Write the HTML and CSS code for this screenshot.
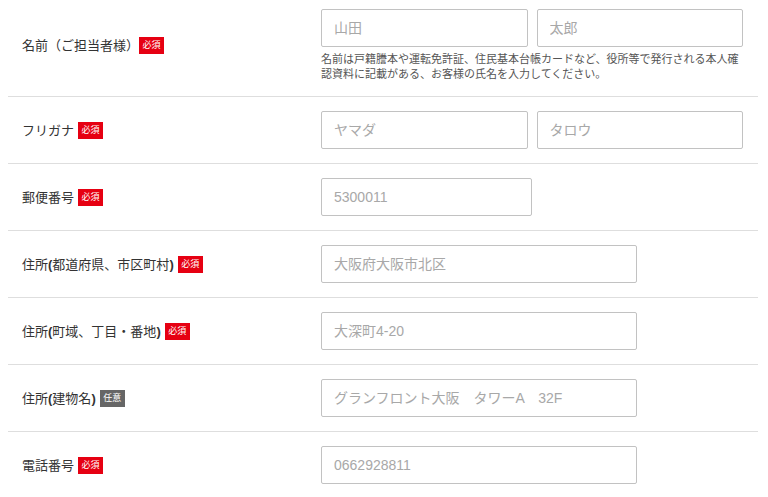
FILE: index.html
```html
<!DOCTYPE html>
<html lang="ja">
<head>
    <meta charset="UTF-8">
    <meta name="viewport" content="width=device-width, initial-scale=1.0">
    <title>お客様情報の入力</title>
    <link rel="stylesheet" href="styles.css">
</head>
<body>
    <form class="entry-form">
        <div class="form-row">
            <div class="form-label">名前（ご担当者様）<span class="badge tight">必須</span></div>
            <div class="form-field">
                <div class="field-pair">
                    <input type="text" class="text-input" placeholder="山田">
                    <input type="text" class="text-input" placeholder="太郎">
                </div>
                <p class="field-note">名前は戸籍謄本や運転免許証、住民基本台帳カードなど、役所等で発行される本人確認資料に記載がある、お客様の氏名を入力してください。</p>
            </div>
        </div>
        <div class="form-row">
            <div class="form-label">フリガナ<span class="badge">必須</span></div>
            <div class="form-field">
                <div class="field-pair">
                    <input type="text" class="text-input" placeholder="ヤマダ">
                    <input type="text" class="text-input" placeholder="タロウ">
                </div>
            </div>
        </div>
        <div class="form-row">
            <div class="form-label">郵便番号<span class="badge">必須</span></div>
            <div class="form-field">
                <input type="text" class="text-input zip" placeholder="5300011">
            </div>
        </div>
        <div class="form-row">
            <div class="form-label">住所<b>(</b>都道府県、市区町村<b>)</b><span class="badge">必須</span></div>
            <div class="form-field">
                <input type="text" class="text-input wide" placeholder="大阪府大阪市北区">
            </div>
        </div>
        <div class="form-row">
            <div class="form-label">住所<b>(</b>町域、丁目・番地<b>)</b><span class="badge">必須</span></div>
            <div class="form-field">
                <input type="text" class="text-input wide" placeholder="大深町4-20">
            </div>
        </div>
        <div class="form-row">
            <div class="form-label">住所<b>(</b>建物名<b>)</b><span class="badge optional">任意</span></div>
            <div class="form-field">
                <input type="text" class="text-input wide" placeholder="グランフロント大阪　タワーA　32F">
            </div>
        </div>
        <div class="form-row">
            <div class="form-label">電話番号<span class="badge">必須</span></div>
            <div class="form-field">
                <input type="text" class="text-input wide" placeholder="0662928811">
            </div>
        </div>
    </form>
</body>
</html>
```

FILE: styles.css
```css
body {
    font-family: "Liberation Sans", "Noto Sans CJK JP", sans-serif;
    background-color: #fff;
    color: #333;
    margin: 0;
    padding: 0;
}

.entry-form {
    width: 750px;
    margin-left: 8px;
}

.form-row {
    display: grid;
    grid-template-columns: 313px 1fr;
    align-items: center;
    padding: 14px 0;
    border-bottom: 1px solid #dedede;
}

.form-row:first-child {
    padding-top: 9px;
}

.form-label {
    padding-left: 14px;
    font-size: 13px;
    line-height: 17px;
    display: flex;
    align-items: center;
}

.form-label b {
    font-weight: 700;
}

.badge {
    display: inline-block;
    margin-left: 4px;
    width: 25px;
    height: 17px;
    line-height: 17px;
    text-align: center;
    font-size: 9px;
    color: #fff;
    background-color: #e60012;
}

/* full-width bracket already leaves room */
.badge.tight {
    margin-left: 0;
}

.badge.optional {
    background-color: #666;
}

.field-pair {
    display: flex;
    gap: 9px;
    width: 422px;
}

.field-pair .text-input {
    flex: 1;
    min-width: 0;
}

.text-input {
    box-sizing: border-box;
    height: 38px;
    padding: 0 12px;
    border: 1px solid #c2c2c2;
    border-radius: 2px;
    font-family: inherit;
    font-size: 14px;
    color: #333;
    background: #fff;
}

.text-input::placeholder {
    color: #a8a8a8;
}

.text-input.zip {
    width: 211px;
}

.text-input.wide {
    width: 316px;
}

.field-note {
    width: 422px;
    margin: 5px 0 0;
    font-size: 11px;
    line-height: 15px;
    color: #555;
}
```
